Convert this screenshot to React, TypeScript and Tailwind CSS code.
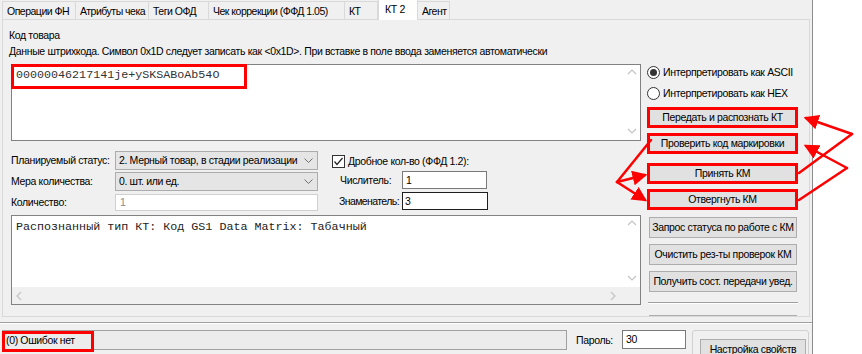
import type { ReactNode } from "react";

const ui = "font-['Liberation_Sans',Arial,sans-serif] text-[10.5px] tracking-[-0.35px] leading-[13px] whitespace-nowrap";
const mono = "font-['Liberation_Mono','Courier_New',monospace] text-[11.7px] tracking-normal";

function Tab({ label, w, active }: { label: string; w: string; active?: boolean }) {
  if (active) {
    return (
      <div className={`${w} h-[21px] -mb-px relative z-10 bg-white border border-b-0 border-[#d9d9d9] pl-[6px] pt-[3px]`}>
        {label}
      </div>
    );
  }
  return (
    <div className={`${w} h-[18px] bg-[#f0f0f0] border border-b-0 border-[#d9d9d9] -ml-px pl-[4px] pt-[3px] tracking-[-0.5px] overflow-hidden`}>
      {label}
    </div>
  );
}

function Btn({ children, red, mt }: { children: ReactNode; red?: boolean; mt: string }) {
  if (red) {
    return (
      <div className={`${mt} shrink-0 w-[151px] h-[21px] border-[3px] border-[#ff0000] bg-[#e1e1e1] flex items-center justify-center`}>
        {children}
      </div>
    );
  }
  return (
    <div className={`${mt} shrink-0 ml-[2px] w-[148px] h-[21px] border border-[#adadad] bg-[#e1e1e1] flex items-center justify-center`}>
      {children}
    </div>
  );
}

function Chevron({ dir }: { dir: "up" | "down" | "left" | "right" }) {
  const pts = {
    up: "1,6 5,2 9,6",
    down: "1,2 5,6 9,2",
    left: "6,1 2,5 6,9",
    right: "2,1 6,5 2,9",
  }[dir];
  return (
    <svg width="10" height="10" viewBox="0 0 10 10">
      <polyline points={pts} fill="none" stroke="#c4c4c4" strokeWidth="1.2" />
    </svg>
  );
}

function Select({ value }: { value: string }) {
  return (
    <div className="w-[203px] h-[19px] border border-[#acacac] bg-[#e5e5e5] flex items-center pl-[3px] pr-[4px]">
      <span className="flex-1">{value}</span>
      <svg width="9" height="6" viewBox="0 0 9 6">
        <polyline points="0.5,0.5 4.5,4.5 8.5,0.5" fill="none" stroke="#707070" strokeWidth="1" />
      </svg>
    </div>
  );
}

export default function App() {
  return (
    <div className={`w-[862px] h-[354px] bg-white flex overflow-hidden text-black relative ${ui}`}>
      <div className="w-[813px] h-full bg-[#f0f0f0] border-r border-[#8c8c8c] flex flex-col *:shrink-0">
        {/* tabs */}
        <div className="h-[19px] flex items-end pl-[3px]">
          <Tab label="Операции ФН" w="w-[74px]" />
          <Tab label="Атрибуты чека" w="w-[74px]" />
          <Tab label="Теги ОФД" w="w-[61px]" />
          <Tab label="Чек коррекции (ФФД 1.05)" w="w-[137px]" />
          <Tab label="КТ" w="w-[34px]" />
          <Tab label="КТ 2" w="w-[40px]" active />
          <Tab label="Агент" w="w-[33px]" />
        </div>

        {/* tab page */}
        <div className="ml-[2px] w-[808px] h-[298px] border border-[#d9d9d9] bg-[#f0f0f0] overflow-hidden flex">
          {/* left column */}
          <div className="w-[638px] pl-[6px] flex flex-col *:shrink-0">
            <div className="mt-[9px] h-[13px]">Код товара</div>
            <div className="mt-[3px] h-[13px]">
              Данные штрихкода. Символ 0x1D следует записать как &lt;0x1D&gt;. При вставке в поле ввода заменяется автоматически
            </div>
            <div className="mt-[6px] ml-[2px] w-[630px] h-[77px] border border-[#828282] bg-white flex">
              <div className="flex-1 relative">
                <div className="absolute left-[-1px] top-[-1px] w-[236px] h-[25px] border-[3px] border-[#ff0000]" />
                <div className={`${mono} text-[#333] pl-[4px] pt-[4px]`}>00000046217141je+ySKSABoAb54O</div>
              </div>
              <div className="w-[17px] flex flex-col items-center justify-between py-[3px]">
                <Chevron dir="up" />
                <Chevron dir="down" />
              </div>
            </div>

            {/* form */}
            <div className="mt-[10px] ml-[2px] flex">
              <div className="flex flex-col">
                <div className="flex items-center h-[19px]">
                  <span className="w-[104px]">Планируемый статус:</span>
                  <Select value="2. Мерный товар, в стадии реализации" />
                </div>
                <div className="flex items-center h-[19px] mt-[2px]">
                  <span className="w-[104px]">Мера количества:</span>
                  <Select value="0. шт. или ед." />
                </div>
                <div className="flex items-center h-[17px] mt-[3px]">
                  <span className="w-[104px]">Количество:</span>
                  <div className="w-[203px] h-[17px] border border-[#d0d0d0] bg-white pl-[4px] text-[#8a8a8a] flex items-center">1</div>
                </div>
              </div>
              <div className="ml-[14px] flex flex-col">
                <div className="mt-[3px] h-[14px] flex items-center">
                  <div className="w-[13px] h-[13px] border border-[#333] bg-white flex items-center justify-center">
                    <svg width="11" height="11" viewBox="0 0 11 11">
                      <polyline points="1.5,5.5 4,8.5 9.5,2" fill="none" stroke="#222" strokeWidth="1.2" />
                    </svg>
                  </div>
                  <span className="ml-[3px]">Дробное кол-во (ФФД 1.2):</span>
                </div>
                <div className="mt-[3px] pl-[8px] flex items-center h-[18px]">
                  <span className="w-[62px]">Числитель:</span>
                  <div className="w-[85px] h-[18px] border border-[#7a7a7a] bg-white pl-[3px] flex items-center">1</div>
                </div>
                <div className="mt-[3px] pl-[7px] flex items-center h-[18px]">
                  <span className="w-[63px] tracking-[-0.6px]">Знаменатель:</span>
                  <div className="w-[86px] h-[18px] border border-[#1e1e1e] bg-white pl-[2px] flex items-center">3</div>
                </div>
              </div>
            </div>

            <div className="mt-[4px] ml-[2px] w-[630px] h-[90px] border border-[#828282] bg-white flex flex-col">
              <div className="flex flex-1">
                <div className={`${mono} flex-1 text-[#222] pl-[4px] pt-[5px]`}>
                  Распознанный тип КТ: Код GS1 Data Matrix: Табачный
                </div>
                <div className="w-[17px] flex flex-col items-center justify-between py-[3px]">
                  <Chevron dir="up" />
                  <Chevron dir="down" />
                </div>
              </div>
              <div className="h-[17px] flex items-center justify-between pl-[3px] pr-[21px] bg-[#f0f0f0]">
                <Chevron dir="left" />
                <Chevron dir="right" />
              </div>
            </div>
          </div>

          {/* right column */}
          <div className="ml-[6px] w-[156px] flex flex-col *:shrink-0">
            <div className="mt-[44px] h-[17px] flex items-center">
              <div className="w-[13px] h-[13px] rounded-full border border-[#333] bg-white flex items-center justify-center">
                <div className="w-[7px] h-[7px] rounded-full bg-[#333]" />
              </div>
              <span className="ml-[3px]">Интерпретировать как ASCII</span>
            </div>
            <div className="mt-[4px] h-[17px] flex items-center">
              <div className="w-[13px] h-[13px] rounded-full border border-[#333] bg-white" />
              <span className="ml-[3px]">Интерпретировать как HEX</span>
            </div>
            <Btn red mt="mt-[5px]">Передать и распознать КТ</Btn>
            <Btn red mt="mt-[5px]">Проверить код маркировки</Btn>
            <Btn red mt="mt-[9px]">Принять КМ</Btn>
            <Btn red mt="mt-[5px]">Отвергнуть КМ</Btn>
            <Btn mt="mt-[7px]">Запрос статуса по работе с КМ</Btn>
            <Btn mt="mt-[6px]">Очистить рез-ты проверок КМ</Btn>
            <Btn mt="mt-[6px]">Получить сост. передачи увед.</Btn>
            <div className="mt-[10px] ml-[1px] w-[150px] border-t border-[#a0a0a0] border-b border-b-white" />
            <Btn mt="mt-[11px]">&nbsp;</Btn>
          </div>
        </div>

        <div className="mt-[5px] h-[2px] border-t border-[#a0a0a0] border-b border-b-white" />

        {/* status row */}
        <div className="mt-[6px] flex items-start pl-[2px]">
          <div className="relative w-[565px] h-[20px] border border-[#a0a0a0] bg-[#ececec] flex items-center pl-[3px]">
            <div className="absolute left-[-1px] top-0 w-[92px] h-[21px] border-[3px] border-[#ff0000]" />
            (0) Ошибок нет
          </div>
          <div className="ml-[9px] mt-[4px] w-[46px]">Пароль:</div>
          <div className="w-[64px] h-[19px] border border-[#7a7a7a] bg-white pl-[3px] flex items-center">30</div>
          <div className="ml-[6px] w-[117px] h-[40px] border border-[#d0d0d0] rounded-[3px] pl-[7px] pt-[8px]">
            <div className="w-[106px] h-[20px] border border-[#adadad] bg-[#e1e1e1] flex items-center justify-center">
              Настройка свойств
            </div>
          </div>
        </div>
      </div>

      {/* annotation arrows */}
      <svg className="absolute left-0 top-0 pointer-events-none" width="862" height="354" viewBox="0 0 862 354">
        <defs>
          <marker id="ah" markerWidth="6" markerHeight="6" refX="5" refY="3" orient="auto" markerUnits="strokeWidth">
            <path d="M0,0 L6,3 L0,6 z" fill="#ff0000" />
          </marker>
        </defs>
        <g stroke="#ff0000" strokeWidth="2.5" fill="none" strokeLinecap="round">
          <line x1="852" y1="134" x2="806" y2="118" markerEnd="url(#ah)" />
          <line x1="852" y1="134" x2="799" y2="173" />
          <line x1="847" y1="168" x2="806" y2="146" markerEnd="url(#ah)" />
          <line x1="847" y1="168" x2="799" y2="200" />
          <line x1="617" y1="182" x2="651" y2="140" />
          <line x1="617" y1="182" x2="645" y2="175" markerEnd="url(#ah)" />
          <line x1="617" y1="182" x2="645" y2="200" markerEnd="url(#ah)" />
        </g>
      </svg>
    </div>
  );
}
